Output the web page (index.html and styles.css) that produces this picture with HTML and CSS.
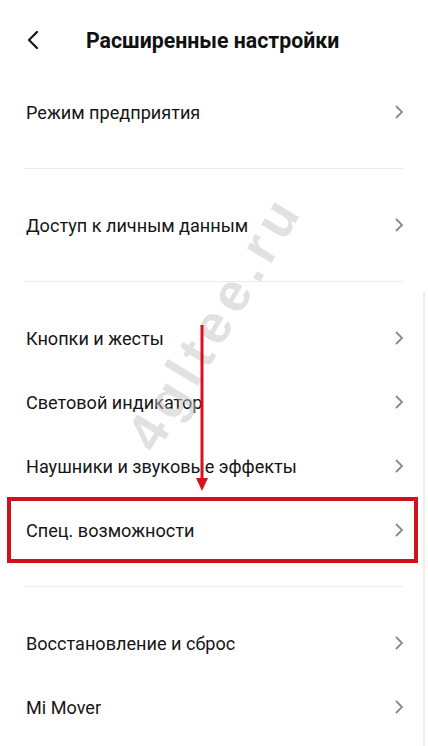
FILE: index.html
```html
<!DOCTYPE html>
<html lang="ru">
<head>
<meta charset="utf-8">
<link rel="stylesheet" href="styles.css">
</head>
<body>
<div class="screen">
  <header class="header">
    <svg class="back" width="14" height="20" viewBox="0 0 14 20"><polyline points="11,2 3,10 11,18" fill="none" stroke="#111" stroke-width="2.2" stroke-linecap="round" stroke-linejoin="round"/></svg>
    <h1 class="title">Расширенные настройки</h1>
  </header>
  <div class="list">
    <div class="row"><span>Режим предприятия</span><svg class="chev" width="10" height="16" viewBox="0 0 10 16"><polyline points="2,2 8,8 2,14" fill="none" stroke="#8a8a8a" stroke-width="1.8"/></svg></div>
    <div class="sep"><div class="line"></div></div>
    <div class="row"><span>Доступ к личным данным</span><svg class="chev" width="10" height="16" viewBox="0 0 10 16"><polyline points="2,2 8,8 2,14" fill="none" stroke="#8a8a8a" stroke-width="1.8"/></svg></div>
    <div class="sep"><div class="line"></div></div>
    <div class="row"><span>Кнопки и жесты</span><svg class="chev" width="10" height="16" viewBox="0 0 10 16"><polyline points="2,2 8,8 2,14" fill="none" stroke="#8a8a8a" stroke-width="1.8"/></svg></div>
    <div class="row"><span>Световой индикатор</span><svg class="chev" width="10" height="16" viewBox="0 0 10 16"><polyline points="2,2 8,8 2,14" fill="none" stroke="#8a8a8a" stroke-width="1.8"/></svg></div>
    <div class="row"><span>Наушники и звуковые эффекты</span><svg class="chev" width="10" height="16" viewBox="0 0 10 16"><polyline points="2,2 8,8 2,14" fill="none" stroke="#8a8a8a" stroke-width="1.8"/></svg></div>
    <div class="row highlighted"><span>Спец. возможности</span><svg class="chev" width="10" height="16" viewBox="0 0 10 16"><polyline points="2,2 8,8 2,14" fill="none" stroke="#8a8a8a" stroke-width="1.8"/></svg></div>
    <div class="sep"><div class="line"></div></div>
    <div class="row"><span>Восстановление и сброс</span><svg class="chev" width="10" height="16" viewBox="0 0 10 16"><polyline points="2,2 8,8 2,14" fill="none" stroke="#8a8a8a" stroke-width="1.8"/></svg></div>
    <div class="row"><span>Mi Mover</span><svg class="chev" width="10" height="16" viewBox="0 0 10 16"><polyline points="2,2 8,8 2,14" fill="none" stroke="#8a8a8a" stroke-width="1.8"/></svg></div>
  </div>
  <div class="scrollbar"></div>
  <div class="watermark">4gltee.ru</div>
  <svg class="arrow" width="14" height="170" viewBox="0 0 14 170"><line x1="7" y1="1" x2="7" y2="158" stroke="#d8121b" stroke-width="3"/><polygon points="1,154 13,154 7,167" fill="#d8121b"/></svg>
</div>
</body>
</html>
```
FILE: styles.css
```css
* { box-sizing: border-box; }
html, body { margin: 0; padding: 0; background: #fff; }
body { font-family: Roboto, "Noto Sans", "Liberation Sans", sans-serif; color: #111; }
.screen { position: relative; width: 428px; height: 746px; overflow: hidden; background: #fff; }
.header { height: 80px; display: flex; align-items: center; padding-left: 26px; }
.back { display: block; margin-top: 0; }
.title { margin: 0 0 0 46px; font-size: 21.3px; font-weight: 700; color: #111; }
.list { display: flex; flex-direction: column; }
.row { height: 64px; display: flex; align-items: center; justify-content: space-between; padding: 0 24px 0 26px; font-size: 18.1px; color: #151515; }
.row.highlighted { margin: 0 11px 0 8px; padding: 0 13px 0 18px; outline: 4px solid #d0121c; outline-offset: -3px; }
.sep { height: 49px; display: flex; align-items: center; padding: 0 25px; }
.line { height: 1px; width: 100%; background: #ececec; }
.scrollbar { position: absolute; right: 3px; top: 292px; width: 2px; height: 460px; background: #ececec; }
.watermark { position: absolute; left: 72px; top: 294px; width: 280px; text-align: center; font-family: "Liberation Sans", Arial, sans-serif; font-weight: 700; font-size: 54px; letter-spacing: 7px; color: rgba(195,195,195,0.5); transform: rotate(-59deg); pointer-events: none; }
.arrow { position: absolute; left: 195px; top: 324px; }
```
